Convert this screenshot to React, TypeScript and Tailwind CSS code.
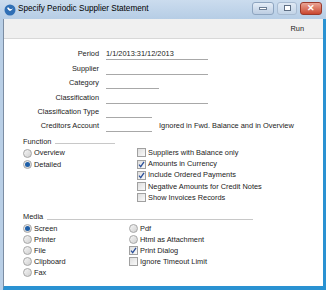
import React from "react";

const font = { fontFamily: '"Liberation Sans", Arial, sans-serif' };

function Radio({ on }: { on?: boolean }) {
  return (
    <span className="w-[9px] h-[9px] rounded-full border border-[#a6a6a6] bg-gradient-to-br from-[#f6f6f6] to-[#d0d0d0] flex items-center justify-center shrink-0">
      {on && <span className="w-[5px] h-[5px] rounded-full bg-[#1f5fa8]" />}
    </span>
  );
}

function Check({ on }: { on?: boolean }) {
  return (
    <span className="w-[9px] h-[9px] border border-[#a0a0a0] bg-gradient-to-br from-[#dedede] to-[#fafafa] flex items-center justify-center shrink-0">
      {on && (
        <svg width="7" height="7" viewBox="0 0 7 7">
          <path d="M1 3.6 L2.7 5.6 L6 0.8" stroke="#2a4f9a" strokeWidth="1.3" fill="none" />
        </svg>
      )}
    </span>
  );
}

function Field({ label, width, value, note }: { label: string; width: string; value?: string; note?: string }) {
  return (
    <div className="flex items-end h-[14.4px]">
      <div className="w-[102px] text-right pr-[7px] leading-[10px] h-[11px]">{label}</div>
      <div className={`${width} border-b border-[#a8a8a8] leading-[10px] h-[11px]`}>{value}</div>
      {note && <div className="ml-[7px] leading-[10px] h-[11px]">{note}</div>}
    </div>
  );
}

function Opt({ children, label, h }: { children: React.ReactNode; label: string; h: string }) {
  return (
    <div className={`flex items-center gap-[2px] ${h} leading-[10px]`}>
      {children}
      <span>{label}</span>
    </div>
  );
}

export default function App() {
  return (
    <div className="w-[326px] h-[290px] bg-[#b9cfe6] flex flex-col text-[#222] text-[7.4px]" style={font}>
      <div className="h-[19px] flex items-center pl-[4px] pr-[4px] bg-gradient-to-b from-[#cbdcee] to-[#b6cde5]">
        <svg width="12" height="12" viewBox="0 0 12 12" className="mr-[2px]">
          <circle cx="6" cy="6" r="5.5" fill="#2f6fb5" />
          <path d="M3 4 Q6 10 9.5 3.5 Q7 7 4.2 3.2 Z" fill="#fff" />
        </svg>
        <span className="text-[8.2px] text-black">Specify Periodic Supplier Statement</span>
        <div className="ml-auto flex items-center gap-[3px] mt-[-3px]">
          <div className="w-[22px] h-[13px] rounded-[3px] border border-[#8ea5c0] bg-gradient-to-b from-[#e4edf7] to-[#bccde2] flex items-center justify-center">
            <span className="w-[8px] h-[3px] bg-white border border-[#6d7f96]" />
          </div>
          <div className="w-[20px] h-[13px] rounded-[3px] border border-[#a9bcd2] bg-gradient-to-b from-[#dfe9f4] to-[#c3d4e7] flex items-center justify-center">
            <span className="w-[7px] h-[6px] border border-[#5f6f84] bg-white" />
          </div>
          <div className="w-[22px] h-[13px] rounded-[3px] border border-[#9a3a2c] bg-gradient-to-b from-[#e9a495] to-[#c9452e] flex items-center justify-center text-white text-[9px] font-bold leading-none">
            ✕
          </div>
        </div>
      </div>
      <div className="flex-1 ml-[3px] flex flex-col bg-white border-l border-[#7b8da3] border-r-[3px] border-r-[#2a92d2] border-b-[4px] border-b-[#2a92d2]">
        <div className="h-[20px] bg-[#f0f0f0] border-b border-[#d8d8d8] flex items-center justify-end pr-[19px]">
          Run
        </div>
        <div className="flex-1 flex flex-col pt-[7px]">
          <Field label="Period" width="w-[102px]" value="1/1/2013:31/12/2013" />
          <Field label="Supplier" width="w-[102px]" />
          <Field label="Category" width="w-[53px]" />
          <Field label="Classification" width="w-[102px]" />
          <Field label="Classification Type" width="w-[46px]" />
          <Field label="Creditors Account" width="w-[46px]" note="Ignored in Fwd. Balance and in Overview" />

          <div className="mt-[4.5px] pl-[19px] flex items-center h-[10px] leading-[10px]">
            <span>Function</span>
            <span className="ml-[4px] w-[60px] border-b border-[#c8c8c8] mt-[4px]" />
          </div>
          <div className="flex pl-[19px] mt-[0.5px]">
            <div className="w-[114px] flex flex-col">
              <Opt label="Overview" h="h-[11.5px]"><Radio /></Opt>
              <Opt label="Detailed" h="h-[11.5px]"><Radio on /></Opt>
            </div>
            <div className="flex flex-col">
              <Opt label="Suppliers with Balance only" h="h-[11.25px]"><Check /></Opt>
              <Opt label="Amounts in Currency" h="h-[11.25px]"><Check on /></Opt>
              <Opt label="Include Ordered Payments" h="h-[11.25px]"><Check on /></Opt>
              <Opt label="Negative Amounts for Credit Notes" h="h-[11.25px]"><Check /></Opt>
              <Opt label="Show Invoices Records" h="h-[11.25px]"><Check /></Opt>
            </div>
          </div>

          <div className="mt-[8.5px] pl-[19px] flex items-center h-[10px] leading-[10px]">
            <span>Media</span>
            <span className="ml-[4px] w-[206px] border-b border-[#c8c8c8] mt-[4px]" />
          </div>
          <div className="flex pl-[19px] mt-[1px]">
            <div className="w-[106px] flex flex-col">
              <Opt label="Screen" h="h-[11px]"><Radio on /></Opt>
              <Opt label="Printer" h="h-[11px]"><Radio /></Opt>
              <Opt label="File" h="h-[11px]"><Radio /></Opt>
              <Opt label="Clipboard" h="h-[11px]"><Radio /></Opt>
              <Opt label="Fax" h="h-[11px]"><Radio /></Opt>
            </div>
            <div className="flex flex-col">
              <Opt label="Pdf" h="h-[11px]"><Radio /></Opt>
              <Opt label="Html as Attachment" h="h-[11px]"><Radio /></Opt>
              <Opt label="Print Dialog" h="h-[11px]"><Check on /></Opt>
              <Opt label="Ignore Timeout Limit" h="h-[11px]"><Check /></Opt>
            </div>
          </div>
        </div>
      </div>
    </div>
  );
}
